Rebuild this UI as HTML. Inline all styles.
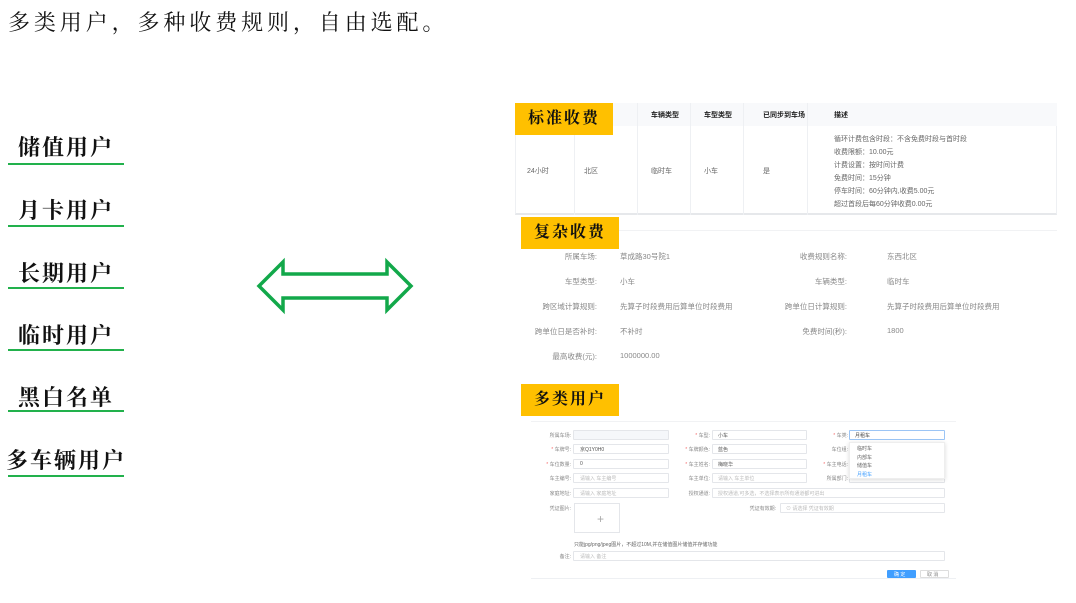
<!DOCTYPE html>
<html><head><meta charset="utf-8"><style>
*{margin:0;padding:0;box-sizing:border-box}
body{width:1076px;height:603px;background:#fff;position:relative;overflow:hidden;font-family:"Liberation Sans","Noto Sans CJK SC",sans-serif}
.a{position:absolute;white-space:nowrap}
.hd{font-family:"Liberation Serif","Noto Serif CJK SC",serif;font-size:22px;letter-spacing:3.9px;color:#111;left:8px;top:6px}
.lb{font-family:"Liberation Serif","Noto Serif CJK SC",serif;font-weight:bold;font-size:22px;letter-spacing:2px;color:#111;width:116px;text-align:center;left:8px}
.ul{position:absolute;left:8px;width:116px;height:2px;background:#22b14c}
.badge{position:absolute;background:#ffc000;font-family:"Liberation Serif","Noto Serif CJK SC",serif;font-weight:bold;font-size:16px;letter-spacing:2px;color:#111;text-align:center;width:98px;height:32px;line-height:32px}
.s{font-size:7px;color:#666}
.h{font-size:7px;color:#222;font-weight:bold}
.f{font-size:7.5px;color:#888}
.t{font-size:5px;color:#888}
.in{position:absolute;border:1px solid #e4e6ea;height:10px;background:#fff;border-radius:1px}
.vl{position:absolute;width:1px;background:#eef0f3}
</style></head><body>
<div class="a hd">多类用户，多种收费规则，自由选配。</div>

<div class="a lb" style="top:131px">储值用户</div><div class="ul" style="top:163px"></div>
<div class="a lb" style="top:194px">月卡用户</div><div class="ul" style="top:225px"></div>
<div class="a lb" style="top:257px">长期用户</div><div class="ul" style="top:287px"></div>
<div class="a lb" style="top:319px">临时用户</div><div class="ul" style="top:349px"></div>
<div class="a lb" style="top:381px">黑白名单</div><div class="ul" style="top:410px"></div>
<div class="a lb" style="top:444px;left:2px;width:128px">多车辆用户</div><div class="ul" style="top:475px"></div>

<svg class="a" style="left:250px;top:255px" width="170" height="64">
<polygon points="9,31 33,7 33,19 137,19 137,7 161,31 137,55 137,43 33,43 33,55" fill="none" stroke="#12a84a" stroke-width="3.5"/>
</svg>

<div class="a" style="left:515px;top:103px;width:542px;height:112px;border:1px solid #eef0f3;border-bottom:2px solid #e6e8eb"></div>
<div class="a" style="left:515px;top:103px;width:542px;height:23px;background:#f8f9fb"></div>
<div class="vl" style="left:574px;top:103px;height:112px"></div>
<div class="vl" style="left:637px;top:103px;height:112px"></div>
<div class="vl" style="left:690px;top:103px;height:112px"></div>
<div class="vl" style="left:743px;top:103px;height:112px"></div>
<div class="vl" style="left:807px;top:103px;height:112px"></div>
<div class="a h" style="left:651px;top:110px">车辆类型</div>
<div class="a h" style="left:704px;top:110px">车型类型</div>
<div class="a h" style="left:763px;top:110px">已同步到车场</div>
<div class="a h" style="left:834px;top:110px">描述</div>
<div class="a s" style="left:527px;top:166px">24小时</div>
<div class="a s" style="left:584px;top:166px">北区</div>
<div class="a s" style="left:651px;top:166px">临时车</div>
<div class="a s" style="left:704px;top:166px">小车</div>
<div class="a s" style="left:763px;top:166px">是</div>
<div class="a s" style="left:834px;top:133px;line-height:13.1px">循环计费包含时段：不含免费时段与首时段<br>收费限额：10.00元<br>计费设置：按时间计费<br>免费时间：15分钟<br>停车时间：60分钟内,收费5.00元<br>超过首段后每60分钟收费0.00元</div>
<div class="badge" style="left:515px;top:103px">标准收费</div>

<div class="a" style="left:521px;top:230px;width:536px;height:1px;background:#f1f2f4"></div>
<div class="badge" style="left:521px;top:217px">复杂收费</div>
<div class="a f" style="right:479px;top:251px">所属车场:</div><div class="a f" style="left:620px;top:251px">草成路30号院1</div>
<div class="a f" style="right:479px;top:276px">车型类型:</div><div class="a f" style="left:620px;top:276px">小车</div>
<div class="a f" style="right:479px;top:301px">跨区域计算规则:</div><div class="a f" style="left:620px;top:301px">先算子时段费用后算单位时段费用</div>
<div class="a f" style="right:479px;top:326px">跨单位日是否补时:</div><div class="a f" style="left:620px;top:326px">不补时</div>
<div class="a f" style="right:479px;top:351px">最高收费(元):</div><div class="a f" style="left:620px;top:351px">1000000.00</div>
<div class="a f" style="right:229px;top:251px">收费规则名称:</div><div class="a f" style="left:887px;top:251px">东西北区</div>
<div class="a f" style="right:229px;top:276px">车辆类型:</div><div class="a f" style="left:887px;top:276px">临时车</div>
<div class="a f" style="right:229px;top:301px">跨单位日计算规则:</div><div class="a f" style="left:887px;top:301px">先算子时段费用后算单位时段费用</div>
<div class="a f" style="right:229px;top:326px">免费时间(秒):</div><div class="a f" style="left:887px;top:326px">1800</div>

<div class="badge" style="left:521px;top:384px">多类用户</div>
<div class="a" style="left:531px;top:421px;width:425px;height:1px;background:#f1f2f4"></div>
<div class="a t" style="right:505px;top:432px">所属车场:</div><div class="in" style="left:573px;top:430px;width:96px;background:#f5f7fa"></div>
<div class="a t" style="right:505px;top:446px"><span style="color:#f56c6c">*</span> 车牌号:</div><div class="in" style="left:573px;top:444px;width:96px"></div><div class="a t" style="left:580px;top:446px;color:#555">京Q1Y0H0</div>
<div class="a t" style="right:505px;top:461px"><span style="color:#f56c6c">*</span> 车位数量:</div><div class="in" style="left:573px;top:459px;width:96px"></div><div class="a t" style="left:580px;top:461px;color:#555">0</div>
<div class="a t" style="right:505px;top:475px">车主编号:</div><div class="in" style="left:573px;top:473px;width:96px"></div><div class="a t" style="left:580px;top:475px;color:#bbb">请输入 车主编号</div>
<div class="a t" style="right:505px;top:490px">家庭地址:</div><div class="in" style="left:573px;top:488px;width:96px"></div><div class="a t" style="left:580px;top:490px;color:#bbb">请输入 家庭地址</div>
<div class="a t" style="right:505px;top:505px">凭证图片:</div>
<div class="a" style="left:574px;top:503px;width:46px;height:30px;border:1px solid #e4e6ea"></div>
<div class="a" style="left:597px;top:512px;font-size:12px;color:#aaa;font-weight:200">+</div>
<div class="a t" style="left:574px;top:541px;color:#666">只能jpg/png/jpeg图片，不超过10M,并在储值图片储值并存储功能</div>
<div class="a t" style="right:505px;top:553px">备注:</div><div class="in" style="left:573px;top:551px;width:372px"></div><div class="a t" style="left:580px;top:553px;color:#bbb">请输入 备注</div>

<div class="a t" style="right:366px;top:432px"><span style="color:#f56c6c">*</span> 车型:</div><div class="in" style="left:712px;top:430px;width:95px"></div><div class="a t" style="left:718px;top:432px;color:#555">小车</div>
<div class="a t" style="right:366px;top:446px"><span style="color:#f56c6c">*</span> 车牌颜色:</div><div class="in" style="left:712px;top:444px;width:95px"></div><div class="a t" style="left:718px;top:446px;color:#555">蓝色</div>
<div class="a t" style="right:366px;top:461px"><span style="color:#f56c6c">*</span> 车主姓名:</div><div class="in" style="left:712px;top:459px;width:95px"></div><div class="a t" style="left:718px;top:461px;color:#555">梅晓华</div>
<div class="a t" style="right:366px;top:475px">车主单位:</div><div class="in" style="left:712px;top:473px;width:95px"></div><div class="a t" style="left:718px;top:475px;color:#bbb">请输入 车主单位</div>
<div class="a t" style="right:366px;top:490px">授权通道:</div><div class="in" style="left:712px;top:488px;width:233px"></div><div class="a t" style="left:718px;top:490px;color:#bbb">授权通道,可多选，不选择表示所有通道都可进出</div>
<div class="a t" style="right:300px;top:505px">凭证有效期:</div><div class="in" style="left:780px;top:503px;width:165px"></div><div class="a t" style="left:786px;top:505px;color:#bbb">⊙ 请选择 凭证有效期</div>

<div class="a t" style="right:228px;top:432px"><span style="color:#f56c6c">*</span> 车类:</div><div class="in" style="left:849px;top:430px;width:96px;border-color:#9cc5f5"></div><div class="a t" style="left:855px;top:432px;color:#444">月租车</div>
<div class="a t" style="right:228px;top:446px">车位组:</div>
<div class="a t" style="right:228px;top:461px"><span style="color:#f56c6c">*</span> 车主电话:</div>
<div class="a t" style="right:228px;top:475px">所属部门:</div><div class="in" style="left:849px;top:473px;width:96px"></div>
<div class="a" style="left:849px;top:442px;width:96px;height:37px;background:#fff;box-shadow:0 1px 4px rgba(0,0,0,.15);border:1px solid #eee"></div>
<div class="a t" style="left:857px;top:445px;color:#666;line-height:8.5px">临时车<br>内部车<br>储值车<br><span style="color:#409eff">月租车</span></div>

<div class="a" style="left:887px;top:570px;width:29px;height:8px;background:#409eff;border-radius:1px"></div><div class="a t" style="left:894px;top:571px;color:#fff">确 定</div>
<div class="a" style="left:920px;top:570px;width:29px;height:8px;border:1px solid #ddd;border-radius:1px"></div><div class="a t" style="left:927px;top:571px">取 消</div>
<div class="a" style="left:531px;top:578px;width:425px;height:1px;background:#eef0f3"></div>
</body></html>
